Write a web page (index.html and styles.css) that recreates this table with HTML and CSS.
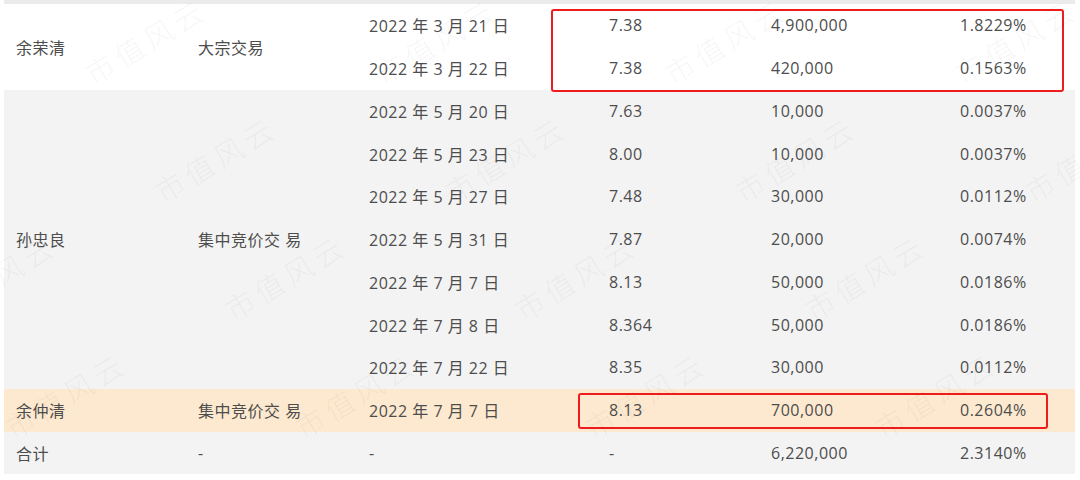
FILE: index.html
```html
<!DOCTYPE html>
<html lang="zh-CN">
<head>
    <meta charset="UTF-8">
    <title>减持明细</title>
    <link rel="stylesheet" href="styles.css">
</head>
<body>
    <div class="sheet">
        <div class="strip"></div>
        <table class="trades">
            <colgroup>
                <col class="c-name">
                <col class="c-type">
                <col class="c-date">
                <col class="c-price">
                <col class="c-shares">
                <col class="c-pct">
            </colgroup>
            <tbody class="group-white">
                <tr>
                    <td rowspan="2">余荣清</td>
                    <td rowspan="2">大宗交易</td>
                    <td>2022 年 3 月 21 日</td>
                    <td>7.38</td>
                    <td>4,900,000</td>
                    <td>1.8229%</td>
                </tr>
                <tr>
                    <td>2022 年 3 月 22 日</td>
                    <td>7.38</td>
                    <td>420,000</td>
                    <td>0.1563%</td>
                </tr>
            </tbody>
            <tbody class="group-gray">
                <tr>
                    <td rowspan="7">孙忠良</td>
                    <td rowspan="7">集中竞价交 易</td>
                    <td>2022 年 5 月 20 日</td>
                    <td>7.63</td>
                    <td>10,000</td>
                    <td>0.0037%</td>
                </tr>
                <tr><td>2022 年 5 月 23 日</td><td>8.00</td><td>10,000</td><td>0.0037%</td></tr>
                <tr><td>2022 年 5 月 27 日</td><td>7.48</td><td>30,000</td><td>0.0112%</td></tr>
                <tr><td>2022 年 5 月 31 日</td><td>7.87</td><td>20,000</td><td>0.0074%</td></tr>
                <tr><td>2022 年 7 月 7 日</td><td>8.13</td><td>50,000</td><td>0.0186%</td></tr>
                <tr><td>2022 年 7 月 8 日</td><td>8.364</td><td>50,000</td><td>0.0186%</td></tr>
                <tr><td>2022 年 7 月 22 日</td><td>8.35</td><td>30,000</td><td>0.0112%</td></tr>
            </tbody>
            <tbody class="group-orange">
                <tr>
                    <td>余仲清</td>
                    <td>集中竞价交 易</td>
                    <td>2022 年 7 月 7 日</td>
                    <td>8.13</td>
                    <td>700,000</td>
                    <td>0.2604%</td>
                </tr>
            </tbody>
            <tbody class="group-gray">
                <tr>
                    <td>合计</td>
                    <td>-</td>
                    <td>-</td>
                    <td>-</td>
                    <td>6,220,000</td>
                    <td>2.3140%</td>
                </tr>
            </tbody>
        </table>

        <!-- red highlight frames drawn over the table -->
        <div class="mark mark-top"></div>
        <div class="mark mark-bottom"></div>
    </div>

    <div class="watermark">
        <div class="wm-row row-a"><span>市值风云</span><span>市值风云</span><span>市值风云</span><span>市值风云</span></div>
        <div class="wm-row row-b"><span>市值风云</span><span>市值风云</span><span>市值风云</span><span>市值风云</span></div>
        <div class="wm-row row-c"><span>市值风云</span><span>市值风云</span><span>市值风云</span><span>市值风云</span></div>
        <div class="wm-row row-d"><span>市值风云</span><span>市值风云</span><span>市值风云</span><span>市值风云</span></div>
    </div>
</body>
</html>
```

FILE: styles.css
```css
/* Global */
body {
    margin: 0;
    background: #ffffff;
    font-family: "Open Sans", "Noto Sans CJK SC", sans-serif;
    font-size: 16px;
    letter-spacing: 0.5px;
    color: #4d4d4d;
    overflow: hidden;
}

/* Table wrapper */
.sheet {
    position: relative;
    width: 1071px;
    margin-left: 4px;
}

.strip {
    height: 4px;
    background: #ebebeb;
}

/* Table */
.trades {
    width: 100%;
    border-collapse: collapse;
    table-layout: fixed;
}

.c-name   { width: 182px; }
.c-type   { width: 171px; }
.c-date   { width: 240px; }
.c-price  { width: 162px; }
.c-shares { width: 189px; }
.c-pct    { width: 127px; }

.trades tr {
    height: 42.75px;
}

.trades td {
    padding: 0 12px;
    vertical-align: middle;
    white-space: nowrap;
}

.group-white td  { background: #ffffff; }
.group-gray td   { background: #f3f3f3; }
.group-orange td { background: #fde9cf; }

/* Red frames */
.mark {
    position: absolute;
    border: 2.5px solid #ee1c1c;
    border-radius: 3px;
    box-sizing: border-box;
}

.mark-top {
    left: 547px;
    top: 9px;
    width: 513px;
    height: 83px;
}

.mark-bottom {
    left: 574px;
    top: 393px;
    width: 470px;
    height: 36px;
}

/* Watermark */
.watermark {
    position: absolute;
    top: -19px;
    left: 0;
    right: 0;
    height: 520px;
    overflow: hidden;
    pointer-events: none;
}

.wm-row {
    display: flex;
    height: 118px;
    align-items: center;
}

.wm-row span {
    flex: 0 0 290px;
    text-align: center;
    font-family: "Noto Sans CJK SC", sans-serif;
    font-weight: 200;
    font-size: 29px;
    letter-spacing: 5px;
    color: rgba(0, 0, 0, 0.055);
    transform: rotate(-31deg);
}

.row-a { margin-left: 0; }
.row-b { margin-left: 70px; }
.row-c { margin-left: -150px; }
.row-d { margin-left: -80px; }
```
